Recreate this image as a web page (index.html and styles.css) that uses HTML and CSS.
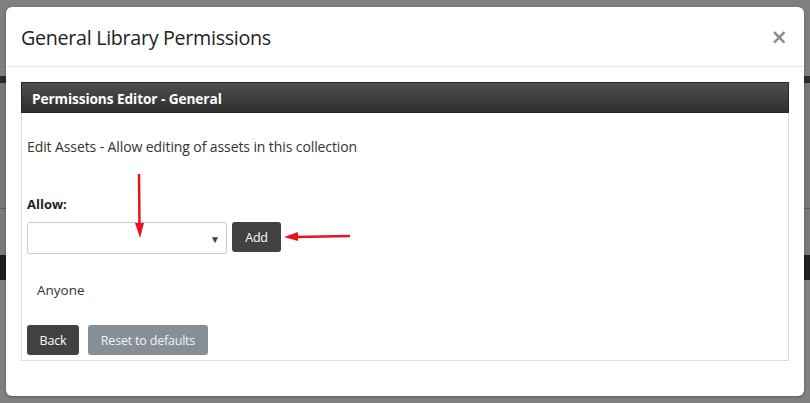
FILE: index.html
```html
<!DOCTYPE html>
<html>
<head>
<meta charset="utf-8">
<link rel="stylesheet" href="styles.css">
</head>
<body>
<div class="backdrop">
  <div class="bd-top"></div>
  <div class="bd-nav"></div>
  <div class="bd-mid"></div>
  <div class="bd-line"></div>
  <div class="bd-mid2"></div>
  <div class="bd-dark"></div>
  <div class="bd-rest"></div>
</div>
<div class="modal">
  <div class="modal-header">
    <h4 class="modal-title">General Library Permissions</h4>
    <span class="close">×</span>
  </div>
  <div class="modal-body">
    <div class="panel">
      <div class="panel-heading">Permissions Editor - General</div>
      <div class="panel-body">
        <p class="desc">Edit Assets - Allow editing of assets in this collection</p>
        <div class="label">Allow:</div>
        <div class="add-row">
          <div class="select"><span class="caret">▼</span></div>
          <button class="btn btn-dark">Add</button>
        </div>
        <div class="entry">Anyone</div>
        <div class="actions">
          <button class="btn btn-dark">Back</button>
          <button class="btn btn-gray">Reset to defaults</button>
        </div>
      </div>
    </div>
  </div>
</div>
<svg class="annot" width="810" height="403" viewBox="0 0 810 403">
  <line x1="139" y1="174" x2="139.5" y2="226" stroke="#e8141b" stroke-width="2.5"/>
  <polygon points="135,223 144,223 140,238" fill="#e8141b"/>
  <line x1="350" y1="236" x2="296" y2="237" stroke="#e8141b" stroke-width="2.5"/>
  <polygon points="298,232 298,241 284,237" fill="#e8141b"/>
</svg>
</body>
</html>
```
FILE: styles.css
```css
html, body {
  margin: 0;
  padding: 0;
  width: 810px;
  height: 403px;
  overflow: hidden;
  background: #7d7d7d;
  font-family: "Open Sans", "Noto Sans", sans-serif;
}
.backdrop { display: flex; flex-direction: column; height: 403px; }
.bd-top { height: 76px; background: #7f7f7f; }
.bd-nav { height: 7px; background: #2b2b2b; }
.bd-mid { height: 125px; background: #787878; }
.bd-line { height: 1px; background: #5c5c5c; }
.bd-mid2 { height: 46px; background: #7a7a7a; }
.bd-dark { height: 25px; background: #1f1f1f; }
.bd-rest { flex: 1; background: #808080; }

.modal {
  position: absolute;
  left: 6px;
  top: 7px;
  width: 798px;
  height: 389px;
  background: #fff;
  border-radius: 6px;
  box-shadow: 0 1px 3px rgba(0,0,0,0.3);
  box-sizing: border-box;
}
.modal-header {
  height: 60px;
  border-bottom: 1px solid #e5e5e5;
  box-sizing: border-box;
  padding: 0 15px;
  display: flex;
  align-items: center;
  justify-content: space-between;
}
.modal-title {
  margin: 0;
  font-size: 19.7px;
  font-weight: 400;
  color: #222;
  letter-spacing: -0.3px;
  padding-top: 2px;
}
.close {
  font-size: 27px;
  font-weight: 600;
  color: #8a8a8a;
  line-height: 1;
  margin-right: 2px;
  margin-top: 0;
}
.modal-body { padding: 15px; }
.panel {
  border: 1px solid #ddd;
  border-top: none;
}
.panel-heading {
  height: 31px;
  margin: 0 -1px;
  box-sizing: border-box;
  background: linear-gradient(#4e4e4e, #2f2f2f);
  border: 1px solid #262626;
  color: #fff;
  font-weight: 700;
  font-size: 13.7px;
  padding-left: 10px;
  padding-top: 1px;
  display: flex;
  align-items: center;
  letter-spacing: -0.1px;
}
.panel-body {
  padding: 24px 5px 5px;
  font-size: 13.5px;
  color: #333;
}
.desc { margin: 0; line-height: 20px; font-size: 14px; letter-spacing: -0.1px; }
.label {
  margin-top: 37px;
  line-height: 20px;
  font-weight: 700;
  font-size: 13px;
  color: #222;
}
.add-row {
  margin-top: 8px;
  display: flex;
  align-items: flex-start;
  gap: 5px;
}
.select {
  width: 200px;
  height: 32px;
  box-sizing: border-box;
  border: 1px solid #ccc;
  border-radius: 3px;
  display: flex;
  align-items: center;
  justify-content: flex-end;
  padding-right: 6px;
}
.caret { font-size: 10px; color: #444; margin-top: 2px; }
.btn {
  border: none;
  border-radius: 3px;
  font-family: "Open Sans", "Noto Sans", sans-serif;
  font-size: 12.5px;
  height: 30px;
  padding: 0 12px;
  color: #fff;
  letter-spacing: -0.2px;
}
.btn-dark { background: #414141; }
.btn-gray { background: #868e96; color: #f2f2f2; }
.add-row .btn { width: 49px; padding: 0; }
.entry {
  margin-top: 26px;
  padding-left: 10px;
  line-height: 20px;
}
.actions {
  margin-top: 25px;
  display: flex;
  gap: 9px;
}
.actions .btn:first-child { width: 52px; padding: 0; }
.actions .btn-gray { width: 120px; padding: 0; }
.annot { position: absolute; left: 0; top: 0; pointer-events: none; }
```
